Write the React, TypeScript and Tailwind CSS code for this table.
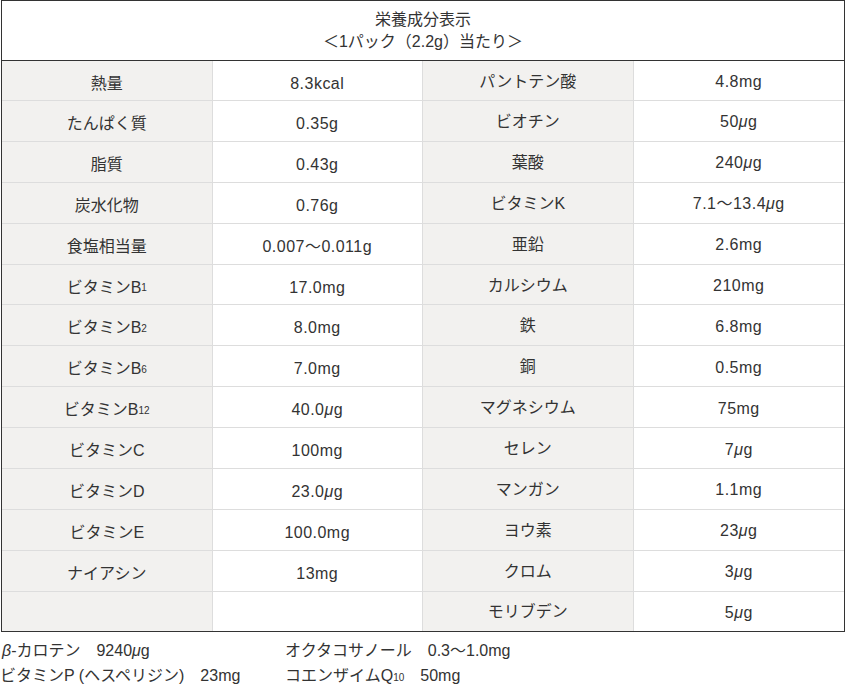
const font = {
  fontFamily: '"Liberation Sans", "Noto Sans CJK JP", sans-serif',
};

function Mu() {
  return <span className="italic">μ</span>;
}

function Sub({ children }: { children: React.ReactNode }) {
  return <span className="text-[10px]">{children}</span>;
}

const left: [React.ReactNode, React.ReactNode][] = [
  ["熱量", "8.3kcal"],
  ["たんぱく質", "0.35g"],
  ["脂質", "0.43g"],
  ["炭水化物", "0.76g"],
  ["食塩相当量", "0.007〜0.011g"],
  [<>ビタミンB<Sub>1</Sub></>, "17.0mg"],
  [<>ビタミンB<Sub>2</Sub></>, "8.0mg"],
  [<>ビタミンB<Sub>6</Sub></>, "7.0mg"],
  [<>ビタミンB<Sub>12</Sub></>, <>40.0<Mu />g</>],
  ["ビタミンC", "100mg"],
  ["ビタミンD", <>23.0<Mu />g</>],
  ["ビタミンE", "100.0mg"],
  ["ナイアシン", "13mg"],
  ["", ""],
];

const right: [React.ReactNode, React.ReactNode][] = [
  ["パントテン酸", "4.8mg"],
  ["ビオチン", <>50<Mu />g</>],
  ["葉酸", <>240<Mu />g</>],
  ["ビタミンK", <>7.1〜13.4<Mu />g</>],
  ["亜鉛", "2.6mg"],
  ["カルシウム", "210mg"],
  ["鉄", "6.8mg"],
  ["銅", "0.5mg"],
  ["マグネシウム", "75mg"],
  ["セレン", <>7<Mu />g</>],
  ["マンガン", "1.1mg"],
  ["ヨウ素", <>23<Mu />g</>],
  ["クロム", <>3<Mu />g</>],
  ["モリブデン", <>5<Mu />g</>],
];

export default function App() {
  return (
    <div className="w-[846px] h-[690px] bg-white text-[#333] text-[16px]" style={font}>
      <div className="ml-px w-[844px] border border-[#333]">
        <div className="h-[60px] border-b border-[#333] flex flex-col items-center justify-center leading-[22px]">
          <div>栄養成分表示</div>
          <div>＜1パック（2.2g）当たり＞</div>
        </div>

        <div className="grid grid-cols-4">
          {left.map((l, i) => {
            const r = right[i];
            const last = i === left.length - 1;
            const h = i === 0 ? "h-[40px] border-b" : last ? "h-[39.5px]" : "h-[40.9px] border-b";
            return (
              <div key={i} className="contents">
                <div className={`${h} bg-[#f2f1ef] border-r border-[#ddd] flex items-center justify-center pt-[6px]`}>
                  {l[0]}
                </div>
                <div className={`${h} bg-white border-r border-[#ddd] flex items-center justify-center pt-[6px] tracking-[0.03em]`}>
                  {l[1]}
                </div>
                <div className={`${h} bg-[#f2f1ef] border-r border-[#ddd] flex items-center justify-center pt-[2px]`}>
                  {r[0]}
                </div>
                <div className={`${h} bg-white border-[#ddd] flex items-center justify-center pt-[3px] tracking-[0.03em]`}>
                  {r[1]}
                </div>
              </div>
            );
          })}
        </div>
      </div>

      {/* notes under the table */}
      <div className="grid grid-cols-[285px_1fr] pt-[6px] leading-[25px]">
        <div className="pl-[2px]">
          <span className="italic">β</span>-カロテン　9240<Mu />g
        </div>
        <div>
          オクタコサノール<span className="ml-[16px]">0.3〜1.0mg</span>
        </div>
        <div>ビタミンP (ヘスペリジン)　23mg</div>
        <div>
          コエンザイムQ<Sub>10</Sub>　50mg
        </div>
      </div>
    </div>
  );
}
